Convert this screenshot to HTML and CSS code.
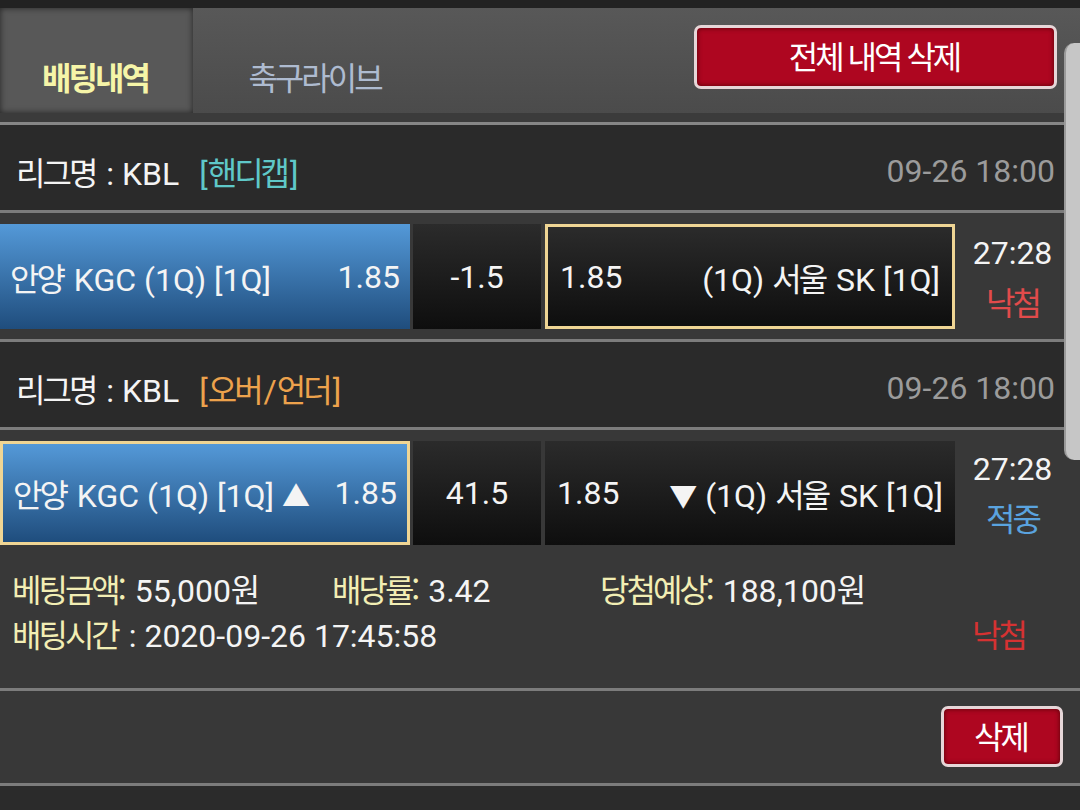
FILE: index.html
```html
<!DOCTYPE html>
<html lang="ko">
<head>
  <meta charset="UTF-8" />
  <meta name="viewport" content="width=device-width, initial-scale=1.0" />
  <title>배팅내역</title>
  <link rel="stylesheet" href="styles.css">
</head>
<body>
  <div class="status-strip"></div>

  <header class="top">
    <nav class="tabs">
      <a class="tab active"><span class="k">배팅내역</span></a>
      <a class="tab"><span class="k">축구라이브</span></a>
    </nav>
    <button class="btn-red btn-all"><span class="k">전체 내역 삭제</span></button>
  </header>
  <div class="top-gap"></div>

  <div class="scroll-thumb"></div>

  <section class="league">
    <span class="lname"><span class="k">리그명</span> : KBL</span>
    <span class="type teal">[<span class="k">핸디캡</span>]</span>
    <span class="date">09-26 18:00</span>
  </section>
  <section class="bet">
    <div class="pick home">
      <span><span class="k">안양</span> KGC (1Q) [1Q]</span>
      <span>1.85</span>
    </div>
    <div class="line">-1.5</div>
    <div class="pick away selected">
      <span>1.85</span>
      <span>(1Q) <span class="k">서울</span> SK [1Q]</span>
    </div>
    <div class="result">
      <div>27:28</div>
      <div class="k lose">낙첨</div>
    </div>
  </section>

  <section class="league">
    <span class="lname"><span class="k">리그명</span> : KBL</span>
    <span class="type orange">[<span class="k">오버</span>/<span class="k">언더</span>]</span>
    <span class="date">09-26 18:00</span>
  </section>
  <section class="bet bet-open">
    <div class="pick home selected">
      <span><span class="k">안양</span> KGC (1Q) [1Q] <span class="tri">▲</span></span>
      <span>1.85</span>
    </div>
    <div class="line">41.5</div>
    <div class="pick away">
      <span>1.85</span>
      <span><span class="tri">▼</span> (1Q) <span class="k">서울</span> SK [1Q]</span>
    </div>
    <div class="result">
      <div>27:28</div>
      <div class="k win">적중</div>
    </div>
  </section>

  <section class="info">
    <div class="info-row">
      <span class="cell c1"><span class="lbl k">베팅금액:</span> 55,000<span class="k">원</span></span>
      <span class="cell c2"><span class="lbl k">배당률:</span> 3.42</span>
      <span class="cell"><span class="lbl k">당첨예상:</span> 188,100<span class="k">원</span></span>
    </div>
    <div class="info-row">
      <span class="cell"><span class="lbl k">배팅시간</span> : 2020-09-26 17:45:58</span>
      <span class="k final-lose">낙첨</span>
    </div>
  </section>

  <section class="actions">
    <button class="btn-red btn-del"><span class="k">삭제</span></button>
  </section>
</body>
</html>
```

FILE: styles.css
```css
:root {
  --row-bg: #383838;
  --league-bg: #2a2a2a;
  --divider: #7c7c7c;
  --label: #f2eeb4;
  --gold: #efd594;
}

* {
  margin: 0;
  padding: 0;
  box-sizing: border-box;
}

body {
  width: 1080px;
  height: 810px;
  overflow: hidden;
  background-color: #2b2b2b;
  color: #f4f4f4;
  font-family: Roboto, "Noto Sans CJK KR", sans-serif;
  font-size: 32px;
  position: relative;
}

/* hangul runs: the device font is narrower than Noto CJK */
.k {
  font-family: "Noto Sans CJK KR", sans-serif;
  font-size: 32px;
  letter-spacing: -3px;
  margin-right: 3px;
}

.tri {
  font-family: "Noto Sans CJK KR", sans-serif;
  font-size: 28px;
}

.status-strip {
  height: 8px;
  background-color: #222222;
}

.top {
  height: 105px;
  display: flex;
  justify-content: space-between;
  background: linear-gradient(#585858, #4b4b4b);
}

.tabs {
  display: flex;
}

.tab {
  display: flex;
  align-items: center;
  justify-content: center;
  padding-top: 30px;
  color: #aebbd0;
}

.tab:first-child {
  width: 193px;
}

.tab:last-child {
  width: 246px;
}

.tab.active {
  background-color: #585858;
  color: #f6f5a8;
  font-weight: 700;
  box-shadow: inset 0 0 6px rgba(0, 0, 0, 0.6);
}

.btn-red {
  background-color: #ae0620;
  color: #ffffff;
  border: 3px solid #e6d6d8;
  border-radius: 7px;
  box-shadow: inset 0 0 5px rgba(60, 0, 0, 0.8);
  font-family: inherit;
  cursor: pointer;
}

.btn-all {
  width: 363px;
  height: 64px;
  margin: 17px 23px 0 0;
  padding-bottom: 4px;
}

.top-gap {
  height: 12px;
  background-color: #3b3b3b;
  border-bottom: 3px solid #868686;
}

.scroll-thumb {
  position: absolute;
  top: 43px;
  right: 0;
  width: 16px;
  height: 417px;
  background-color: #c6c6c6;
  border-left: 2px solid #9a9a9a;
  border-radius: 10px 0 0 10px;
}

.league {
  height: 88px;
  display: flex;
  align-items: center;
  padding: 6px 25px 0 16px;
  background-color: var(--league-bg);
  border-bottom: 3px solid var(--divider);
}

.type {
  margin-left: 20px;
}

.teal {
  color: #5fc8c8;
}

.orange {
  color: #eda24c;
}

.date {
  margin-left: auto;
  color: #9b9b9b;
}

.bet {
  height: 129px;
  display: flex;
  padding: 11px 0 10px;
  background-color: var(--row-bg);
  border-bottom: 3px solid var(--divider);
}

.bet-open {
  border-bottom: none;
  height: 125px;
}

.pick {
  width: 410px;
  display: flex;
  justify-content: space-between;
  align-items: center;
  padding: 0 10px;
  white-space: nowrap;
}

.home {
  background: linear-gradient(#5499d8, #1f4d7d);
}

.away {
  margin-left: 4px;
  padding: 0 12px;
  background: linear-gradient(#2b2b2b, #0e0e0e);
}

.selected {
  border: 3px solid var(--gold);
}

.line {
  width: 128px;
  margin-left: 3px;
  display: flex;
  align-items: center;
  justify-content: center;
  background: linear-gradient(#2b2b2b, #0e0e0e);
}

.result {
  width: 115px;
  display: flex;
  flex-direction: column;
  align-items: center;
  justify-content: center;
  line-height: 1.5;
}

.result .k {
  margin-right: 0;
}

.lose {
  color: #e14b4b;
}

.win {
  color: #5aa3df;
}

.info {
  height: 136px;
  padding: 10px 12px 0;
  background-color: var(--row-bg);
  border-bottom: 3px solid var(--divider);
}

.info-row {
  display: flex;
  align-items: center;
  height: 45px;
}

.c1 {
  width: 320px;
}

.c2 {
  width: 268px;
}

.lbl {
  color: var(--label);
}

.final-lose {
  margin-left: auto;
  margin-right: 43px;
  color: #d53232;
}

.actions {
  height: 95px;
  display: flex;
  justify-content: flex-end;
  align-items: flex-start;
  padding: 15px 17px 0 0;
  background-color: var(--row-bg);
  border-bottom: 3px solid var(--divider);
}

.btn-del {
  width: 122px;
  height: 61px;
  padding-bottom: 3px;
}
```
